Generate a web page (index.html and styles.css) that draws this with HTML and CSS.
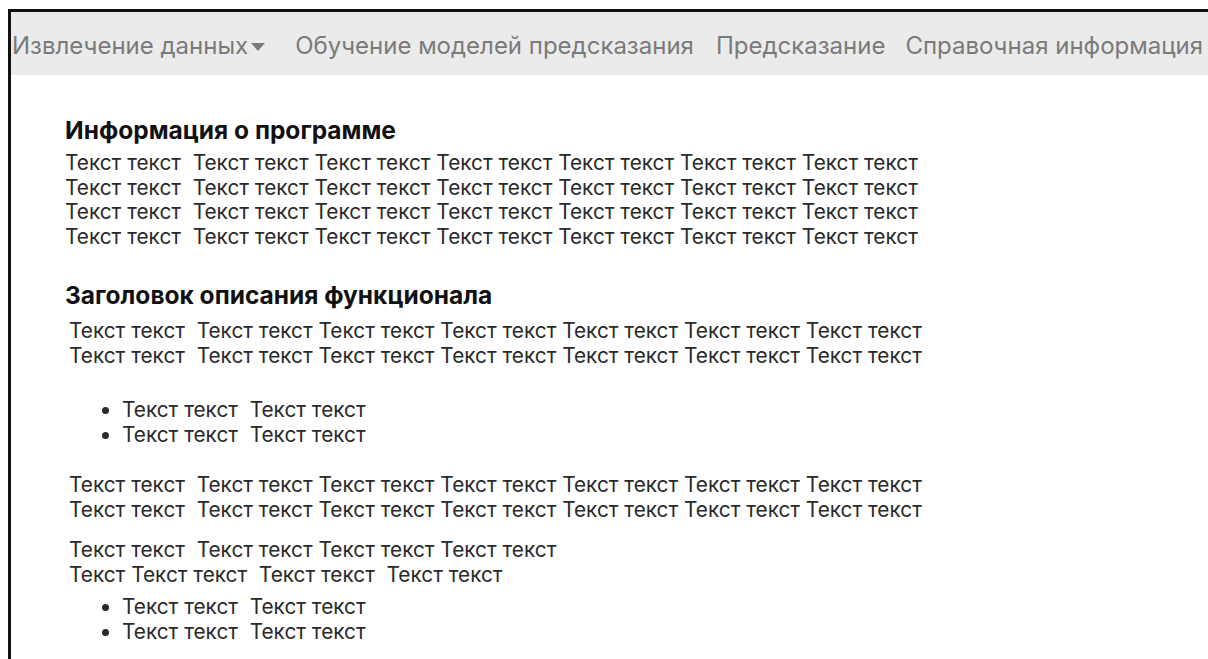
FILE: index.html
```html
<!DOCTYPE html>
<html lang="ru">
<head>
<meta charset="utf-8">
<title>Справочная информация</title>
<link rel="stylesheet" href="styles.css">
</head>
<body>
<div class="frame">
  <nav class="navbar">
    <a class="nav-item dropdown">Извлечение данных<span class="caret"></span></a>
    <a class="nav-item wide">Обучение моделей предсказания</a>
    <a class="nav-item">Предсказание</a>
    <a class="nav-item">Справочная информация</a>
  </nav>
  <main class="content">
    <h2 class="title">Информация о программе</h2>
    <p class="text">Текст текст&nbsp; Текст текст Текст текст Текст текст Текст текст Текст текст Текст текст<br>Текст текст&nbsp; Текст текст Текст текст Текст текст Текст текст Текст текст Текст текст<br>Текст текст&nbsp; Текст текст Текст текст Текст текст Текст текст Текст текст Текст текст<br>Текст текст&nbsp; Текст текст Текст текст Текст текст Текст текст Текст текст Текст текст</p>

    <h2 class="title second">Заголовок описания функционала</h2>
    <p class="text indent">Текст текст&nbsp; Текст текст Текст текст Текст текст Текст текст Текст текст Текст текст<br>Текст текст&nbsp; Текст текст Текст текст Текст текст Текст текст Текст текст Текст текст</p>
    <ul class="list">
      <li>Текст текст&nbsp; Текст текст</li>
      <li>Текст текст&nbsp; Текст текст</li>
    </ul>
    <p class="text indent gap">Текст текст&nbsp; Текст текст Текст текст Текст текст Текст текст Текст текст Текст текст<br>Текст текст&nbsp; Текст текст Текст текст Текст текст Текст текст Текст текст Текст текст</p>
    <p class="text indent">Текст текст&nbsp; Текст текст Текст текст Текст текст<br>Текст Текст текст&nbsp; Текст текст&nbsp; Текст текст</p>
    <ul class="list tight">
      <li>Текст текст&nbsp; Текст текст</li>
      <li>Текст текст&nbsp; Текст текст</li>
    </ul>
  </main>
</div>
</body>
</html>
```
FILE: styles.css
```css
html, body {
  margin: 0;
  padding: 0;
  background: #ffffff;
}

body {
  padding: 9px 0 0 8px;
  font-family: "Inter", "Liberation Sans", sans-serif;
  color: #1a1a1a;
  height: 650px;
  overflow: hidden;
}

.frame {
  border-top: 3px solid #111;
  border-left: 3px solid #111;
  height: 647px;
}

/* top navigation */
.navbar {
  display: flex;
  align-items: center;
  height: 63px;
  background: #ebebeb;
  padding: 4px 0 0 1px;
  box-sizing: border-box;
  white-space: nowrap;
  overflow: hidden;
}

.nav-item {
  font-size: 24px;
  color: #7a7a7a;
  margin-right: 20px;
}

.nav-item.dropdown {
  margin-right: 30px;
}

.nav-item.wide {
  margin-right: 22px;
}

.caret {
  display: inline-block;
  width: 0;
  height: 0;
  border-left: 7px solid transparent;
  border-right: 7px solid transparent;
  border-top: 8px solid #7a7a7a;
  margin-left: 3px;
  vertical-align: 3px;
}

/* page body */
.content {
  padding: 40px 0 0 54px;
}

.title {
  font-size: 24.5px;
  font-weight: 700;
  color: #111;
  margin: 0 0 6px 0;
  line-height: 30px;
}

.title.second {
  margin-top: 31px;
  margin-bottom: 9px;
}

.text {
  font-size: 20.8px;
  line-height: 24.5px;
  margin: 0;
  color: #2a2a2a;
}

.text.indent {
  padding-left: 4px;
}

.text.gap {
  margin-bottom: 16px;
}

.list {
  font-size: 20.8px;
  line-height: 24.5px;
  color: #2a2a2a;
  margin: 30px 0 26px 0;
  padding-left: 57px;
}

.list.tight {
  margin-top: 8px;
}
```
